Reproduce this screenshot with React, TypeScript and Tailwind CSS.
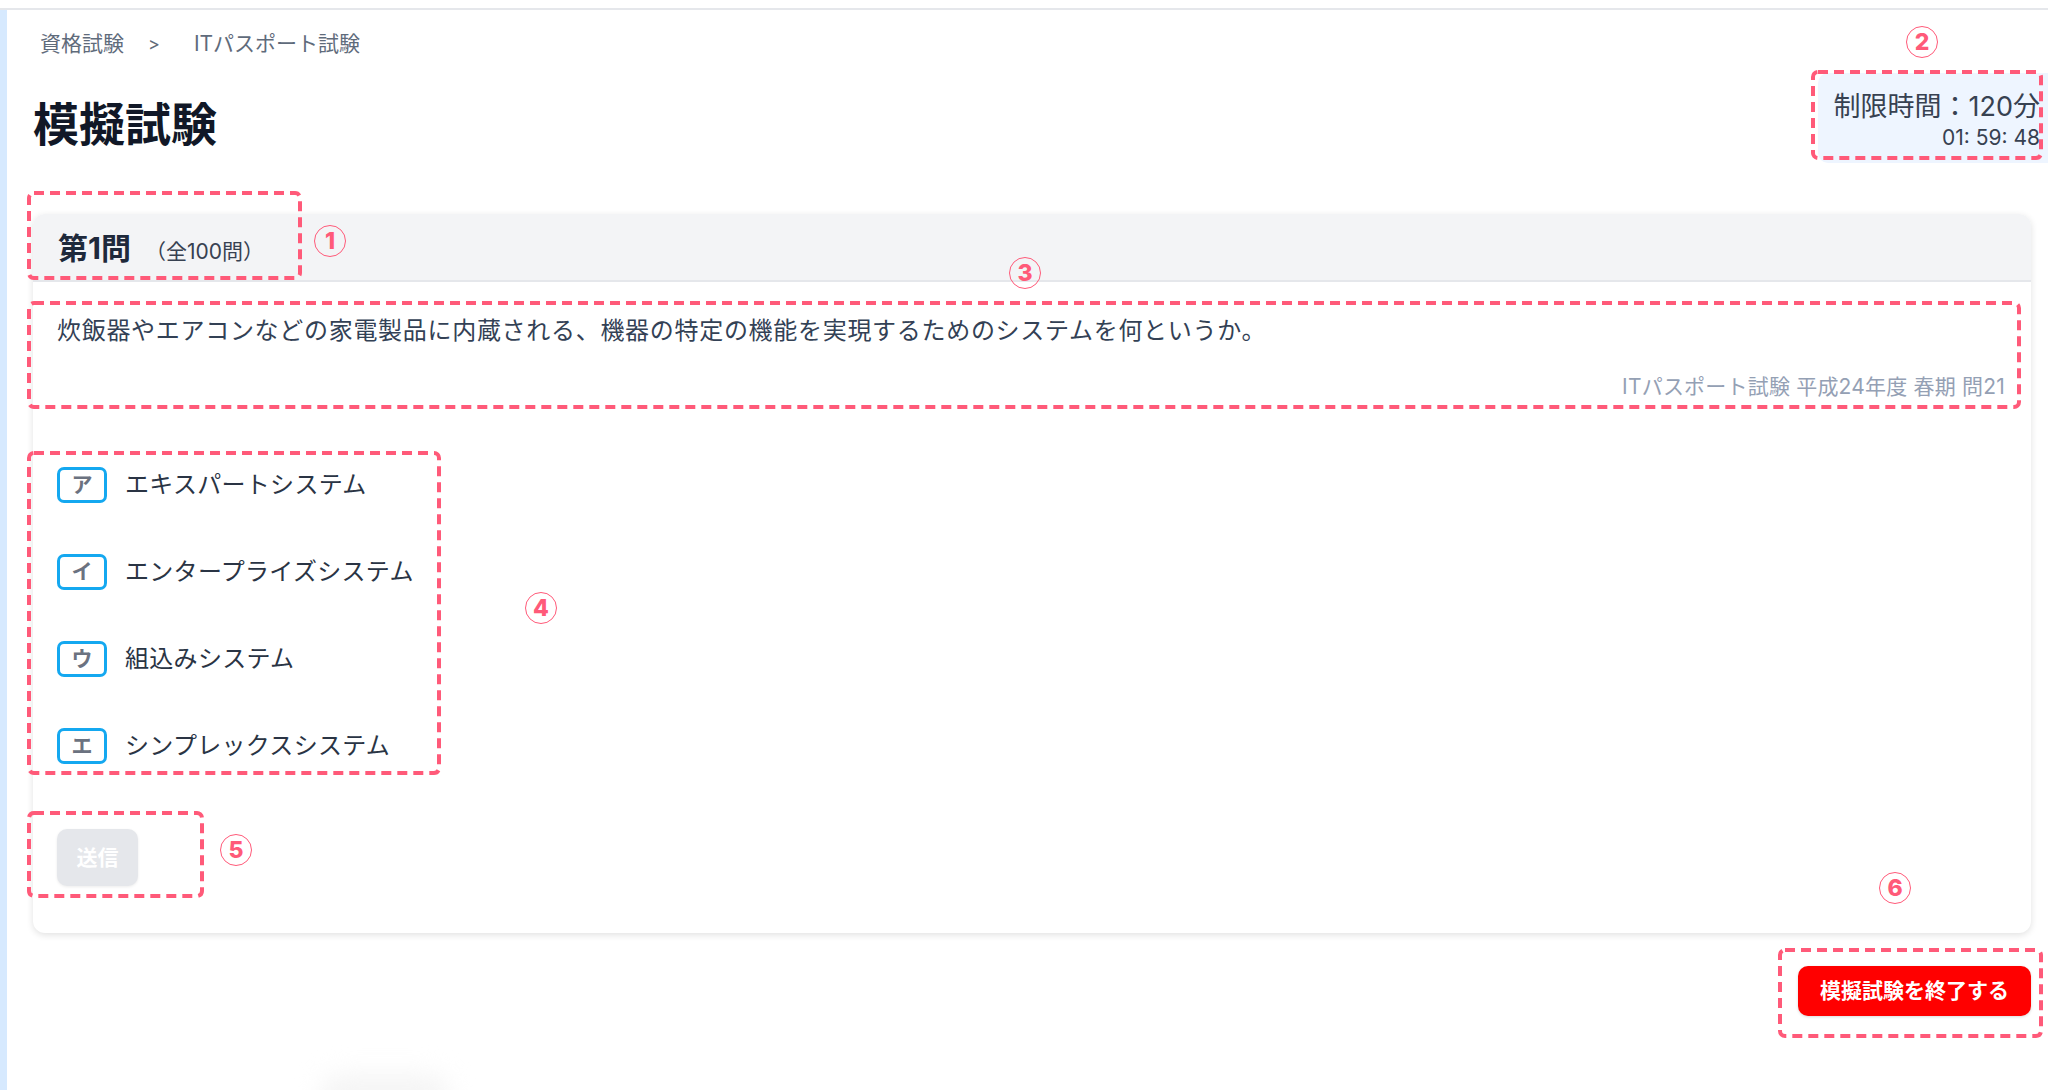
import React from 'react';

// annotation overlays: pink dashed frame + circled number
const Frame = ({ className }: { className: string }) => (
  <svg className={`pointer-events-none absolute overflow-visible ${className}`}>
    <rect
      x="2"
      y="2"
      rx="5"
      className="h-[calc(100%-4px)] w-[calc(100%-4px)]"
      fill="none"
      stroke="#ff5a79"
      strokeWidth="4"
      strokeDasharray="10 6"
    />
  </svg>
);

const Marker = ({ n, className }: { n: string; className: string }) => (
  <div
    className={`pointer-events-none absolute flex h-[32px] w-[32px] items-center justify-center rounded-full border-[1.5px] border-[#ff5a79] text-[23px] font-extrabold leading-none text-[#ff5a79] ${className}`}
  >
    {n}
  </div>
);

const choices = [
  { key: 'ア', label: 'エキスパートシステム' },
  { key: 'イ', label: 'エンタープライズシステム' },
  { key: 'ウ', label: '組込みシステム' },
  { key: 'エ', label: 'シンプレックスシステム' },
];

export default function App() {
  return (
    <div
      className="relative h-[1090px] w-[2048px] overflow-hidden bg-white"
      style={{ fontFamily: 'Inter, "Noto Sans CJK JP", sans-serif' }}
    >
      <div className="h-[10px] border-b-[2px] border-[#e5e7eb]" />
      <div className="flex h-[1080px]">
        <div className="w-[7px] shrink-0 bg-[#d6e9fe]" />
        <main className="flex-1 pl-[26px] pr-[17px]">
          {/* breadcrumb */}
          <nav className="flex items-center pt-[21px] pl-[7px] text-[21px] leading-[26px] text-[#5f6b7b]">
            <span>資格試験</span>
            <span className="ml-[24px] mr-[34px] text-[18px]">&gt;</span>
            <span>ITパスポート試験</span>
          </nav>

          {/* title + timer */}
          <div className="mt-[16px] flex items-start justify-between">
            <h1 className="mt-[23px] text-[46px] font-bold leading-[56px] text-[#111827]">模擬試験</h1>
            <div className="relative mr-[-17px] w-[230px] rounded-l-[10px] bg-[#eef5ff] pt-[17px] pb-[13px] pr-[8px] text-right text-[#374151]">
              <div className="whitespace-nowrap text-[27px] leading-[34px]">制限時間：120分</div>
              <div className="mt-[2px] text-[21px] leading-[24px]">01: 59: 48</div>
              <Frame className="-left-[7px] -top-[3px] h-[90px] w-[232px]" />
              <Marker n="2" className="left-[88px] -top-[47px]" />
            </div>
          </div>

          {/* question card */}
          <section className="relative mt-[51px] rounded-[12px] bg-white shadow-[0_2px_7px_rgba(0,0,0,0.12)]">
            <header className="relative flex h-[68px] items-baseline rounded-t-[12px] border-b-[2px] border-[#e5e7eb] bg-[#f3f4f6] pl-[25px] pt-[14px]">
              <span className="text-[30px] font-bold leading-[40px] text-[#1e293b]">第1問</span>
              <span className="ml-[14px] text-[21px] text-[#374151]">（全100問）</span>
              <Frame className="-left-[6px] -top-[23px] h-[89px] w-[275px]" />
              <Marker n="1" className="left-[281px] top-[11px]" />
            </header>

            <div className="relative mt-[19px] pt-[12px] pb-[7px]">
              <p className="pl-[24px] text-[24px] leading-[36px] tracking-[0.7px] text-[#334155]">
                炊飯器やエアコンなどの家電製品に内蔵される、機器の特定の機能を実現するためのシステムを何というか。
              </p>
              <p className="mt-[23px] pr-[26px] text-right text-[21px] leading-[30px] tracking-[0.2px] text-[#94a0b4]">
                ITパスポート試験 平成24年度 春期 問21
              </p>
              <Frame className="-left-[6px] top-0 h-full w-[calc(100%-4px)]" />
              <Marker n="3" className="left-[976px] -top-[44px]" />
            </div>

            <div className="relative mt-[42px] flex flex-col gap-[51px] pt-[16px] pb-[11px] pl-[24px]">
              {choices.map((c) => (
                <div key={c.key} className="flex h-[36px] items-center">
                  <span className="flex h-[36px] w-[50px] items-center justify-center rounded-[7px] border-[3px] border-[#14a8f0] text-[21px] font-bold text-[#6b7280]">
                    {c.key}
                  </span>
                  <span className="ml-[18px] text-[24px] leading-[36px] tracking-[0.3px] text-[#2a3444]">{c.label}</span>
                </div>
              ))}
              <Frame className="-left-[6px] top-0 h-full w-[414px]" />
              <Marker n="4" className="left-[492px] top-[141px]" />
            </div>

            <div className="pl-[24px] pt-[54px] pb-[47px]">
              <div className="relative w-[81px]">
                <button
                  disabled
                  className="h-[57px] w-[81px] rounded-[10px] bg-[#e5e7eb] text-[21px] font-bold text-white shadow-[0_1px_3px_rgba(0,0,0,0.08)]"
                >
                  送信
                </button>
                <Frame className="-left-[30px] -top-[18px] h-[87px] w-[177px]" />
                <Marker n="5" className="left-[163px] top-[5px]" />
              </div>
            </div>

            <Marker n="6" className="left-[1846px] top-[658px]" />
          </section>

          <div className="mt-[33px] flex justify-end">
            <div className="relative">
              <button className="h-[50px] w-[233px] rounded-[10px] bg-[#ff0000] text-[21px] font-bold text-white shadow-[0_1px_3px_rgba(0,0,0,0.15)]">
                模擬試験を終了する
              </button>
              <Frame className="-left-[20px] -top-[18px] h-[90px] w-[265px]" />
            </div>
          </div>
        </main>
      </div>
      {/* faint blur at the bottom edge */}
      <div className="pointer-events-none absolute bottom-[-28px] left-[320px] h-[44px] w-[130px] rounded-full bg-[#f5f5f5] blur-[12px]" />
    </div>
  );
}
